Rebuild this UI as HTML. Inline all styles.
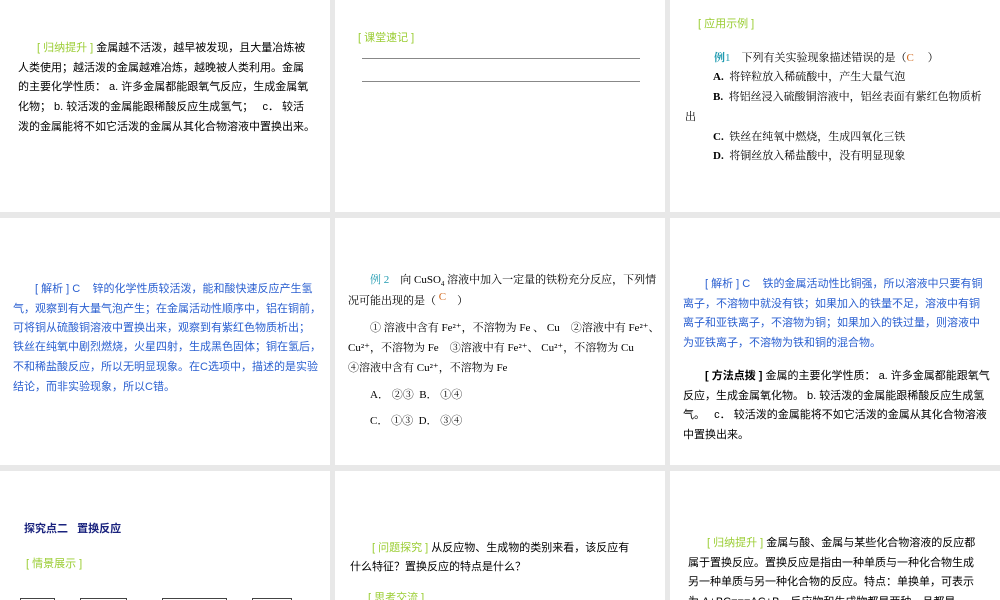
<!DOCTYPE html>
<html><head><meta charset="utf-8"><style>
body{margin:0;width:1000px;height:600px;background:#e8e8e8;position:relative;overflow:hidden;font-family:"Liberation Sans","Noto Sans CJK SC",sans-serif;font-size:11px;color:#000}
.p{position:absolute;background:#fff;overflow:hidden}
.l{position:absolute;white-space:nowrap;line-height:14px}
.s{font-family:"Liberation Serif","Noto Serif CJK SC",serif}
.g{color:#9acd32}
.b{color:#2a5fd0}
.r{color:#d2691e}
.t{color:#1e9ab0;font-weight:bold}
.n{color:#1a237e;font-weight:bold}
.hr{position:absolute;height:1px;background:#888}
.bx{position:absolute;border:1px solid #444;height:10px;top:127px}
</style></head><body>

<div class="p" style="left:0;top:0;width:330px;height:212px">
<div class="l" style="left:37px;top:41px"><span class="g">[ 归纳提升 ]</span> 金属越不活泼，越早被发现，且大量冶炼被</div>
<div class="l" style="left:18px;top:61px">人类使用；越活泼的金属越难冶炼，越晚被人类利用。金属</div>
<div class="l" style="left:18px;top:80px">的主要化学性质： a. 许多金属都能跟氧气反应，生成金属氧</div>
<div class="l" style="left:18px;top:100px">化物； b. 较活泼的金属能跟稀酸反应生成氢气；&nbsp;&nbsp; c． 较活</div>
<div class="l" style="left:18px;top:120px">泼的金属能将不如它活泼的金属从其化合物溶液中置换出来。</div>
</div>

<div class="p" style="left:335px;top:0;width:330px;height:212px">
<div class="l g" style="left:23px;top:31px">[ 课堂速记 ]</div>
<div class="hr" style="left:27px;top:58px;width:278px"></div>
<div class="hr" style="left:27px;top:81px;width:278px"></div>
</div>

<div class="p s" style="left:670px;top:0;width:330px;height:212px">
<div class="l g" style="left:28px;top:17px;font-family:'Liberation Sans','Noto Sans CJK SC',sans-serif">[ 应用示例 ]</div>
<div class="l" style="left:44px;top:51px"><span class="t">例</span><span style="color:#1e9ab0">1</span>&nbsp;&nbsp;&nbsp; 下列有关实验现象描述错误的是（<span class="r">C</span>&nbsp;&nbsp;&nbsp;&nbsp; ）</div>
<div class="l" style="left:43px;top:70px"><b>A.</b>&nbsp; 将锌粒放入稀硫酸中，产生大量气泡</div>
<div class="l" style="left:43px;top:90px"><b>B.</b>&nbsp; 将铝丝浸入硫酸铜溶液中，铝丝表面有紫红色物质析</div>
<div class="l" style="left:15px;top:110px">出</div>
<div class="l" style="left:43px;top:130px"><b>C.</b>&nbsp; 铁丝在纯氧中燃烧，生成四氧化三铁</div>
<div class="l" style="left:43px;top:149px"><b>D.</b>&nbsp; 将铜丝放入稀盐酸中，没有明显现象</div>
</div>

<div class="p b" style="left:0;top:218px;width:330px;height:247px">
<div class="l" style="left:35px;top:64px">[ 解析 ] C&nbsp;&nbsp;&nbsp; 锌的化学性质较活泼，能和酸快速反应产生氢</div>
<div class="l" style="left:13px;top:84px">气，观察到有大量气泡产生；在金属活动性顺序中，铝在铜前，</div>
<div class="l" style="left:13px;top:103px">可将铜从硫酸铜溶液中置换出来，观察到有紫红色物质析出；</div>
<div class="l" style="left:13px;top:122px">铁丝在纯氧中剧烈燃烧，火星四射，生成黑色固体；铜在氢后，</div>
<div class="l" style="left:13px;top:142px">不和稀盐酸反应，所以无明显现象。在C选项中，描述的是实验</div>
<div class="l" style="left:13px;top:162px">结论，而非实验现象，所以C错。</div>
</div>

<div class="p s" style="left:335px;top:218px;width:330px;height:247px">
<div class="l" style="left:35px;top:55px"><span style="color:#1e9ab0">例 2</span>&nbsp;&nbsp;&nbsp; 向 CuSO<sub style="font-size:7px">4</sub> 溶液中加入一定量的铁粉充分反应，下列情</div>
<div class="l" style="left:13px;top:76px">况可能出现的是（ <span class="r" style="position:relative;top:-4px">C</span>&nbsp;&nbsp;&nbsp; ）</div>
<div class="l" style="left:35px;top:103px">① 溶液中含有 Fe²⁺，不溶物为 Fe 、 Cu&nbsp;&nbsp;&nbsp; ②溶液中有 Fe²⁺、</div>
<div class="l" style="left:13px;top:123px">Cu²⁺，不溶物为 Fe&nbsp;&nbsp;&nbsp; ③溶液中有 Fe²⁺、 Cu²⁺，不溶物为 Cu</div>
<div class="l" style="left:13px;top:143px">④溶液中含有 Cu²⁺，不溶物为 Fe</div>
<div class="l" style="left:35px;top:170px">A． ②③&nbsp; B． ①④</div>
<div class="l" style="left:35px;top:196px">C． ①③&nbsp; D． ③④</div>
</div>

<div class="p" style="left:670px;top:218px;width:330px;height:247px">
<div class="l b" style="left:35px;top:59px">[ 解析 ] C&nbsp;&nbsp;&nbsp; 铁的金属活动性比铜强，所以溶液中只要有铜</div>
<div class="l b" style="left:13px;top:79px">离子，不溶物中就没有铁；如果加入的铁量不足，溶液中有铜</div>
<div class="l b" style="left:13px;top:98px">离子和亚铁离子，不溶物为铜；如果加入的铁过量，则溶液中</div>
<div class="l b" style="left:13px;top:118px">为亚铁离子，不溶物为铁和铜的混合物。</div>
<div class="l" style="left:35px;top:151px"><b>[ 方法点拨 ]</b> 金属的主要化学性质： a. 许多金属都能跟氧气</div>
<div class="l" style="left:13px;top:171px">反应，生成金属氧化物。 b. 较活泼的金属能跟稀酸反应生成氢</div>
<div class="l" style="left:13px;top:190px">气。&nbsp;&nbsp; c． 较活泼的金属能将不如它活泼的金属从其化合物溶液</div>
<div class="l" style="left:13px;top:210px">中置换出来。</div>
</div>

<div class="p" style="left:0;top:471px;width:330px;height:129px">
<div class="l n" style="left:24px;top:51px">探究点二&nbsp;&nbsp; 置换反应</div>
<div class="l g" style="left:26px;top:86px">[ 情景展示 ]</div>
<div class="bx" style="left:20px;width:33px"></div>
<div class="bx" style="left:80px;width:45px"></div>
<div class="bx" style="left:162px;width:63px"></div>
<div class="bx" style="left:252px;width:38px"></div>
</div>

<div class="p" style="left:335px;top:471px;width:330px;height:129px">
<div class="l" style="left:37px;top:70px"><span class="g">[ 问题探究 ]</span> 从反应物、生成物的类别来看，该反应有</div>
<div class="l" style="left:15px;top:89px">什么特征？置换反应的特点是什么？</div>
<div class="l g" style="left:33px;top:120px">[ 思考交流 ]</div>
</div>

<div class="p" style="left:670px;top:471px;width:330px;height:129px">
<div class="l" style="left:37px;top:65px"><span class="g">[ 归纳提升 ]</span> 金属与酸、金属与某些化合物溶液的反应都</div>
<div class="l" style="left:18px;top:85px">属于置换反应。置换反应是指由一种单质与一种化合物生成</div>
<div class="l" style="left:18px;top:104px">另一种单质与另一种化合物的反应。特点：单换单，可表示</div>
<div class="l" style="left:18px;top:124px">为 A+BC===AC+B，反应物和生成物都是两种，且都是</div>
</div>

</body></html>
